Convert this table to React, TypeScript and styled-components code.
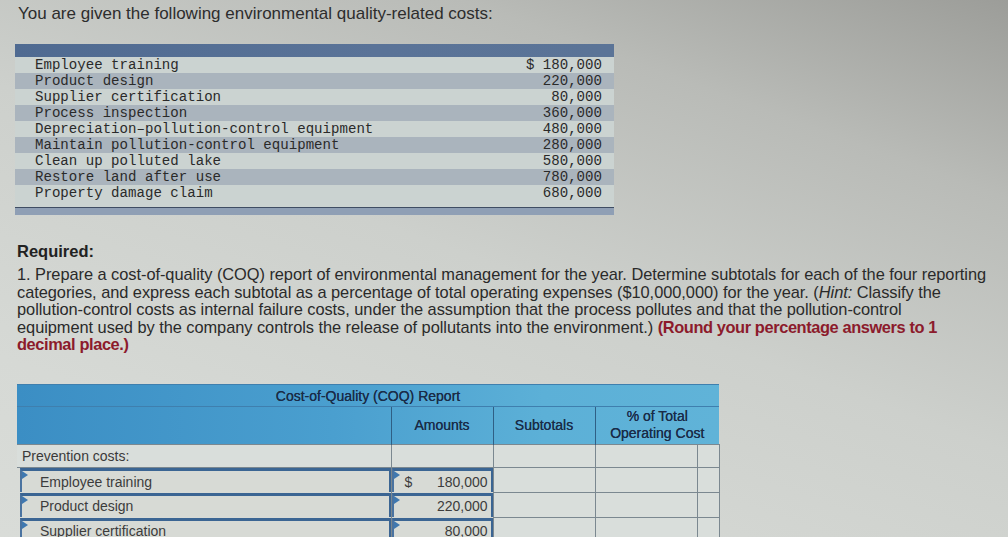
import React from "react";
import styled, { createGlobalStyle } from "styled-components";

const GlobalStyle = createGlobalStyle`
  html, body {
    margin: 0;
    padding: 0;
    height: 537px;
    overflow: hidden;
  }
  body {
    background: linear-gradient(200deg, #9c9d99 0%, #b9bbb7 22%, #cdd0cc 50%, #d6d9d5 80%, #d9dcd8 100%);
    font-family: "Liberation Sans", Arial, sans-serif;
    color: #2b2b2b;
  }
`;

const Page = styled.div`
  padding: 4px 0 0 0;
  width: 1008px;
`;

const Title = styled.div`
  margin-left: 18px;
  font-size: 17px;
  line-height: 20px;
  color: #2d2d2d;
`;

const DataTable = styled.div`
  margin: 20px 0 0 15px;
  width: 599px;
  background: #cbd3d1;
  font-family: "Liberation Mono", "Courier New", monospace;
  font-size: 14.1px;
  color: #2a2a2a;
`;

const DataHeader = styled.div`
  height: 13px;
  background: linear-gradient(to right, #4f6a91, #5a7398 60%, #5b7497);
`;

const DataRow = styled.div<{ $striped: boolean }>`
  display: flex;
  justify-content: space-between;
  align-items: center;
  height: 16px;
  padding: 0 12px 0 20px;
  background: ${(p) => (p.$striped ? "#aab4bd" : "transparent")};
  white-space: pre;
`;

const DataFooter = styled.div`
  margin-top: 6px;
  height: 7px;
  border-top: 1.5px solid #3f4d63;
  background: #8f9fb5;
`;

const Required = styled.div`
  margin: 27px 0 0 17px;
  font-weight: bold;
  font-size: 16.5px;
  line-height: 18px;
  color: #222;
`;

const Paragraph = styled.div`
  margin: 6px 0 0 17px;
  font-size: 16.4px;
  line-height: 17.6px;
  color: #2a2a2a;
  letter-spacing: -0.05px;
`;

const Line = styled.div`
  white-space: nowrap;
`;

const Red = styled.span`
  color: #8c1b2c;
  font-weight: bold;
  letter-spacing: -0.4px;
`;

const Report = styled.table`
  margin: 30px 0 0 17px;
  border-collapse: collapse;
  table-layout: fixed;
  width: 702px;
  font-family: "Liberation Sans", Arial, sans-serif;
  font-size: 14px;
`;

const HeadRow = styled.tr<{ $h: number }>`
  height: ${(p) => p.$h}px;
  background: linear-gradient(to right, #3b8ec4 0%, #4a9fcf 45%, #5cb0d7 75%, #60b3d8 100%);
`;

const HeadCell = styled.th<{ $line?: boolean }>`
  padding: 0;
  font-weight: normal;
  color: #1a2c48;
  text-align: center;
  line-height: 17px;
  border-top: 1px solid #3f7fae;
  border-left: ${(p) => (p.$line ? "1px solid #2f5f85" : "none")};
  text-shadow: 0 0 0.5px #1a2c48;
`;

const TitleCell = styled(HeadCell)`
  font-size: 14px;
  padding-top: 2px;
`;

const BodyRow = styled.tr<{ $h: number }>`
  height: ${(p) => p.$h}px;
`;

const Cell = styled.td`
  padding: 0;
  background: #d9dedb;
  border: 1px solid #7b8890;
  height: inherit;
`;

const LabelCell = styled(Cell)`
  color: #3a3a3a;
  padding-left: 5px;
  border-left: none;
`;

const InputCell = styled.td`
  padding: 0;
  height: inherit;
  border-right: 1px solid #7b8890;
`;

const InputBox = styled.div<{ $indent?: number }>`
  position: relative;
  box-sizing: border-box;
  height: 24px;
  margin-left: ${(p) => p.$indent ?? 0}px;
  background: #d7dad5;
  border-top: 3px solid #3b6593;
  border-left: 2px solid #4a73a0;
  border-right: 2px solid #3b6593;
  display: flex;
  align-items: center;
  color: #3c3c3c;
  &::before {
    content: "";
    position: absolute;
    left: 0;
    top: 0;
    border-top: 4px solid transparent;
    border-bottom: 4px solid transparent;
    border-left: 6px solid #3f78b0;
  }
`;

const LabelText = styled.span`
  padding-left: 18px;
`;

const Amount = styled.div`
  display: flex;
  justify-content: space-between;
  width: 100%;
  padding: 0 3px 0 11px;
  box-sizing: border-box;
`;

const topRows: [string, string][] = [
  ["Employee training", "$ 180,000"],
  ["Product design", "220,000"],
  ["Supplier certification", "80,000"],
  ["Process inspection", "360,000"],
  ["Depreciation–pollution-control equipment", "480,000"],
  ["Maintain pollution-control equipment", "280,000"],
  ["Clean up polluted lake", "580,000"],
  ["Restore land after use", "780,000"],
  ["Property damage claim", "680,000"],
];

const reportRows: [string, string, string][] = [
  ["Employee training", "$", "180,000"],
  ["Product design", "", "220,000"],
  ["Supplier certification", "", "80,000"],
];

export default function App() {
  return (
    <>
      <GlobalStyle />
      <Page>
        <Title>You are given the following environmental quality-related costs:</Title>
        <DataTable>
          <DataHeader />
          {topRows.map(([label, amount], i) => (
            <DataRow key={label} $striped={i % 2 === 1}>
              <span>{label}</span>
              <span>{amount}</span>
            </DataRow>
          ))}
          <DataFooter />
        </DataTable>

        <Required>Required:</Required>
        <Paragraph>
          <Line>
            1. Prepare a cost-of-quality (COQ) report of environmental management for the year. Determine subtotals for each of the four reporting
          </Line>
          <Line>
            categories, and express each subtotal as a percentage of total operating expenses ($10,000,000) for the year. (<i>Hint:</i> Classify the
          </Line>
          <Line>
            pollution-control costs as internal failure costs, under the assumption that the process pollutes and that the pollution-control
          </Line>
          <Line>
            equipment used by the company controls the release of pollutants into the environment.) <Red>(Round your percentage answers to 1</Red>
          </Line>
          <Line>
            <Red>decimal place.)</Red>
          </Line>
        </Paragraph>

        <Report>
          <colgroup>
            <col style={{ width: 374 }} />
            <col style={{ width: 102 }} />
            <col style={{ width: 102 }} />
            <col style={{ width: 102 }} />
            <col style={{ width: 22 }} />
          </colgroup>
          <thead>
            <HeadRow $h={22}>
              <TitleCell colSpan={5}>Cost-of-Quality (COQ) Report</TitleCell>
            </HeadRow>
            <HeadRow $h={38}>
              <HeadCell />
              <HeadCell $line>Amounts</HeadCell>
              <HeadCell $line>Subtotals</HeadCell>
              <HeadCell $line colSpan={2}>
                % of Total
                <br />
                Operating Cost
              </HeadCell>
            </HeadRow>
          </thead>
          <tbody>
            <BodyRow $h={22}>
              <LabelCell>Prevention costs:</LabelCell>
              <Cell />
              <Cell />
              <Cell />
              <Cell />
            </BodyRow>
            {reportRows.map(([label, cur, value]) => (
              <BodyRow $h={24} key={label}>
                <InputCell>
                  <InputBox $indent={3}>
                    <LabelText>{label}</LabelText>
                  </InputBox>
                </InputCell>
                <InputCell>
                  <InputBox>
                    <Amount>
                      <span>{cur}</span>
                      <span>{value}</span>
                    </Amount>
                  </InputBox>
                </InputCell>
                <Cell />
                <Cell />
                <Cell />
              </BodyRow>
            ))}
          </tbody>
        </Report>
      </Page>
    </>
  );
}
